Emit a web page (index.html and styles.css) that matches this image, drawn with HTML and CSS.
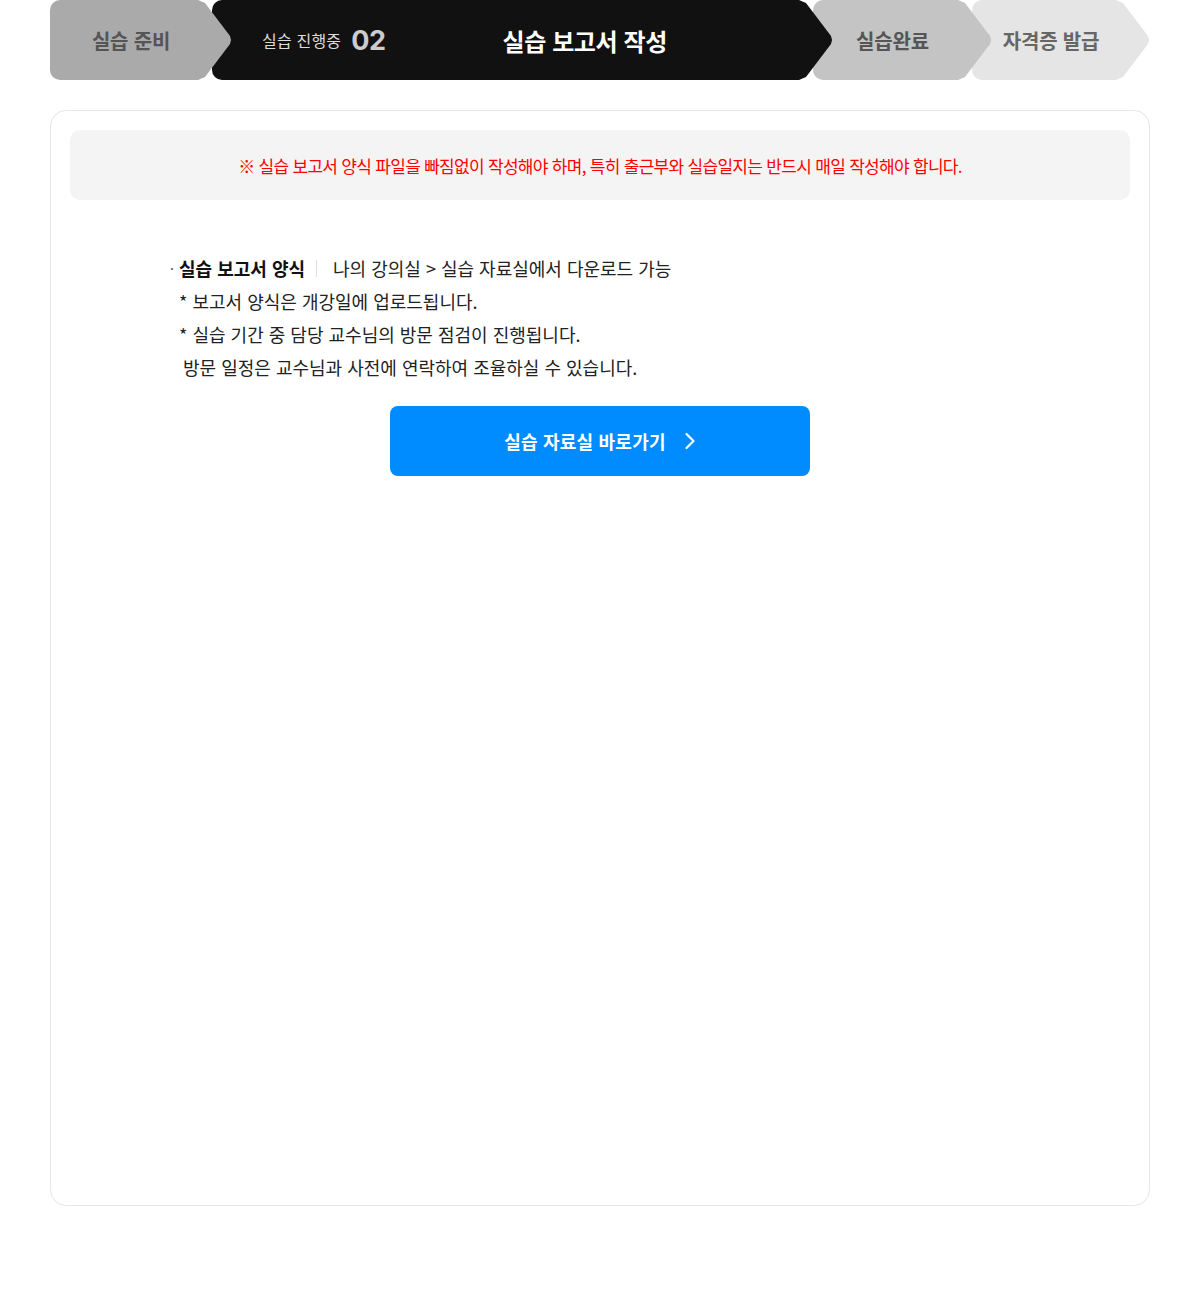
FILE: index.html
```html
<!DOCTYPE html>
<html lang="ko">

<head>
    <meta charset="UTF-8">
    <meta name="viewport" content="width=device-width, initial-scale=1.0">
    <title>실습 보고서 작성</title>
    <link rel="stylesheet" href="styles.css">
</head>

<body>
    <div class="wrap">
        <!-- 단계 표시 -->
        <ol class="steps">
            <li class="step step-done">실습 준비</li>
            <li class="step step-current">
                <span class="step-label">실습 진행중</span>
                <span class="step-num">02</span>
                <span class="step-title">실습 보고서 작성</span>
            </li>
            <li class="step step-next">실습완료</li>
            <li class="step step-last">자격증 발급</li>
        </ol>

        <div class="card">
            <div class="notice">※ 실습 보고서 양식 파일을 빠짐없이 작성해야 하며, 특히 출근부와 실습일지는 반드시 매일 작성해야 합니다.</div>

            <div class="info">
                <p class="info-head">
                    <span class="dot">·</span>
                    <strong>실습 보고서 양식</strong>
                    <span class="bar"></span>
                    <span>나의 강의실 &gt; 실습 자료실에서 다운로드 가능</span>
                </p>
                <p class="info-sub">* 보고서 양식은 개강일에 업로드됩니다.</p>
                <p class="info-sub">* 실습 기간 중 담당 교수님의 방문 점검이 진행됩니다.</p>
                <p class="info-sub info-cont">방문 일정은 교수님과 사전에 연락하여 조율하실 수 있습니다.</p>
            </div>

            <a href="#" class="go-btn">
                실습 자료실 바로가기
                <svg width="12" height="18" viewBox="0 0 12 18">
                    <path d="M2.5 2 L9.5 9 L2.5 16" fill="none" stroke="#fff" stroke-width="2.2" stroke-linecap="round" stroke-linejoin="round" />
                </svg>
            </a>
        </div>
    </div>
</body>

</html>
```

FILE: styles.css
```css
* {
    margin: 0;
    padding: 0;
    box-sizing: border-box;
    font-family: 'Noto Sans CJK KR', 'Noto Sans', sans-serif;
}

body {
    background: #fff;
    color: #222;
}

.wrap {
    padding: 0 50px 100px;
}

.steps {
    display: flex;
    list-style: none;
    height: 80px;
}

.step {
    height: 80px;
    display: flex;
    align-items: center;
    justify-content: center;
    padding-right: 20px;
    border-radius: 10px 0 0 10px;
    font-size: 20px;
    font-weight: 700;
    letter-spacing: -0.2px;
    clip-path: polygon(0 0, calc(100% - 34px) 0, calc(100% - 27px) 3px, calc(100% - 2px) 36px, calc(100% - 1px) 40px, calc(100% - 2px) 44px, calc(100% - 27px) 77px, calc(100% - 34px) 100%, 0 100%);
}

.step + .step {
    margin-left: -20px;
}

.step-done {
    width: 182px;
    background: #aaaaaa;
    color: #555;
    z-index: 4;
}

.step-current {
    width: 621px;
    background: #111111;
    color: #fff;
    justify-content: flex-start;
    padding-left: 50px;
    z-index: 3;
}

.step-next {
    width: 179px;
    background: #c4c4c4;
    color: #555;
    z-index: 2;
}

.step-last {
    width: 178px;
    background: #e5e5e5;
    color: #666;
    z-index: 1;
}

.step-label {
    font-size: 16px;
    font-weight: 400;
    color: #ddd;
    letter-spacing: 0.2px;
}

.step-num {
    font-family: 'Inter', 'Noto Sans', sans-serif;
    font-size: 27px;
    font-weight: 700;
    color: #ccc;
    margin-left: 10px;
    letter-spacing: -0.5px;
}

.step-title {
    margin-left: 117px;
    font-size: 24px;
    font-weight: 700;
    letter-spacing: -0.4px;
}

.card {
    margin-top: 30px;
    height: 1096px;
    border: 1px solid #e6e6e6;
    border-radius: 16px;
    padding: 19px;
}

.notice {
    height: 70px;
    background: #f4f4f4;
    border-radius: 10px;
    display: flex;
    align-items: center;
    justify-content: center;
    color: #ff0000;
    font-size: 17px;
    letter-spacing: -0.7px;
}

.info {
    margin: 52px 0 0 100px;
    font-size: 18px;
    line-height: 33px;
    letter-spacing: 0;
    color: #222;
}

.info-head {
    display: flex;
    align-items: center;
}

.info-head .dot {
    width: 9px;
    font-size: 14px;
    color: #555;
}

.info-head strong {
    font-weight: 700;
    color: #111;
}

.info-head .bar {
    width: 1px;
    height: 17px;
    background: #ddd;
    margin: 0 16px 0 11px;
}

.info-sub {
    padding-left: 9px;
}

.info-cont {
    padding-left: 13px;
}

.go-btn {
    margin: 22px auto 0;
    width: 420px;
    height: 70px;
    background: #008cff;
    border-radius: 8px;
    display: flex;
    align-items: center;
    justify-content: center;
    gap: 18px;
    color: #fff;
    font-size: 18px;
    font-weight: 700;
    letter-spacing: 0.2px;
    text-decoration: none;
}
```
